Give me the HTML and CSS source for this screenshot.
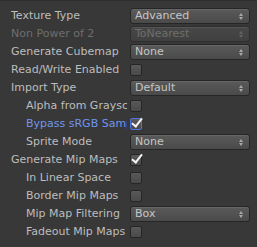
FILE: index.html
```html
<!DOCTYPE html>
<html lang="en">
<head>
  <meta charset="UTF-8" />
  <title>Texture Import Settings</title>
  <link rel="stylesheet" href="styles.css">
</head>
<body>
  <div class="inspector">
    <div class="row">
      <span class="label">Texture Type</span>
      <div class="popup">Advanced<span class="arrows"></span></div>
    </div>
    <div class="row disabled">
      <span class="label">Non Power of 2</span>
      <div class="popup">ToNearest<span class="arrows"></span></div>
    </div>
    <div class="row">
      <span class="label">Generate Cubemap</span>
      <div class="popup">None<span class="arrows"></span></div>
    </div>
    <div class="row">
      <span class="label">Read/Write Enabled</span>
      <span class="toggle"></span>
    </div>
    <div class="row">
      <span class="label">Import Type</span>
      <div class="popup">Default<span class="arrows"></span></div>
    </div>
    <div class="row sub">
      <span class="label">Alpha from Grayscale</span>
      <span class="toggle"></span>
    </div>
    <div class="row sub focus">
      <span class="label">Bypass sRGB Sampling</span>
      <span class="toggle on"></span>
    </div>
    <div class="row sub">
      <span class="label">Sprite Mode</span>
      <div class="popup">None<span class="arrows"></span></div>
    </div>
    <div class="row">
      <span class="label">Generate Mip Maps</span>
      <span class="toggle on"></span>
    </div>
    <div class="row sub">
      <span class="label">In Linear Space</span>
      <span class="toggle"></span>
    </div>
    <div class="row sub">
      <span class="label">Border Mip Maps</span>
      <span class="toggle"></span>
    </div>
    <div class="row sub">
      <span class="label">Mip Map Filtering</span>
      <div class="popup">Box<span class="arrows"></span></div>
    </div>
    <div class="row sub">
      <span class="label">Fadeout Mip Maps</span>
      <span class="toggle"></span>
    </div>
  </div>
</body>
</html>
```

FILE: styles.css
```css
body {
  margin: 0;
  background: #383838;
  font-family: "DejaVu Sans", Verdana, sans-serif;
  font-size: 11px;
  color: #bdbdbd;
}

.inspector {
  border-top: 1px solid #2f2f2f;
  padding: 6px 7px 0 11px;
}

.row {
  display: flex;
  align-items: center;
  gap: 3px;
  height: 18px;
}

.label {
  width: 116px;
  white-space: nowrap;
  overflow: hidden;
  line-height: 18px;
}
.sub .label {
  padding-left: 15px;
  width: 101px;
}

.disabled { color: #6e6e6e; }
.focus .label { color: #6f95ee; }

/* popup menus */
.popup {
  position: relative;
  flex: 1;
  height: 14px;
  line-height: 14px;
  padding-left: 4px;
  border: 1px solid #262626;
  border-radius: 3px;
  background: linear-gradient(#5a5a5a, #4a4a4a);
  box-shadow: inset 0 1px 0 rgba(255,255,255,0.08);
  color: #c6c6c6;
}
.disabled .popup {
  color: #6e6e6e;
  background: linear-gradient(#474747, #404040);
  border-color: #2e2e2e;
}
.arrows {
  position: absolute;
  right: 6px;
  top: 4px;
  width: 0;
  height: 0;
  border-left: 2px solid transparent;
  border-right: 2px solid transparent;
  border-bottom: 3px solid #a8a8a8;
}
.arrows::after {
  content: "";
  position: absolute;
  left: -2px;
  top: 4px;
  border-left: 2px solid transparent;
  border-right: 2px solid transparent;
  border-top: 3px solid #a8a8a8;
}
.disabled .arrows,
.disabled .arrows::after { border-bottom-color: #626262; border-top-color: #626262; }
.disabled .arrows::after { border-bottom-color: transparent; }

/* toggles */
.toggle {
  position: relative;
  width: 10px;
  height: 10px;
  border: 1px solid #262626;
  border-radius: 2px;
  background: linear-gradient(#595959, #4a4a4a);
}
.focus .toggle {
  border-color: #4d74e0;
}
.toggle.on::after {
  content: "";
  position: absolute;
  left: 3px;
  top: -3px;
  width: 4px;
  height: 9px;
  border-right: 2px solid #f4f4f4;
  border-bottom: 2px solid #f4f4f4;
  transform: rotate(38deg);
}
```
